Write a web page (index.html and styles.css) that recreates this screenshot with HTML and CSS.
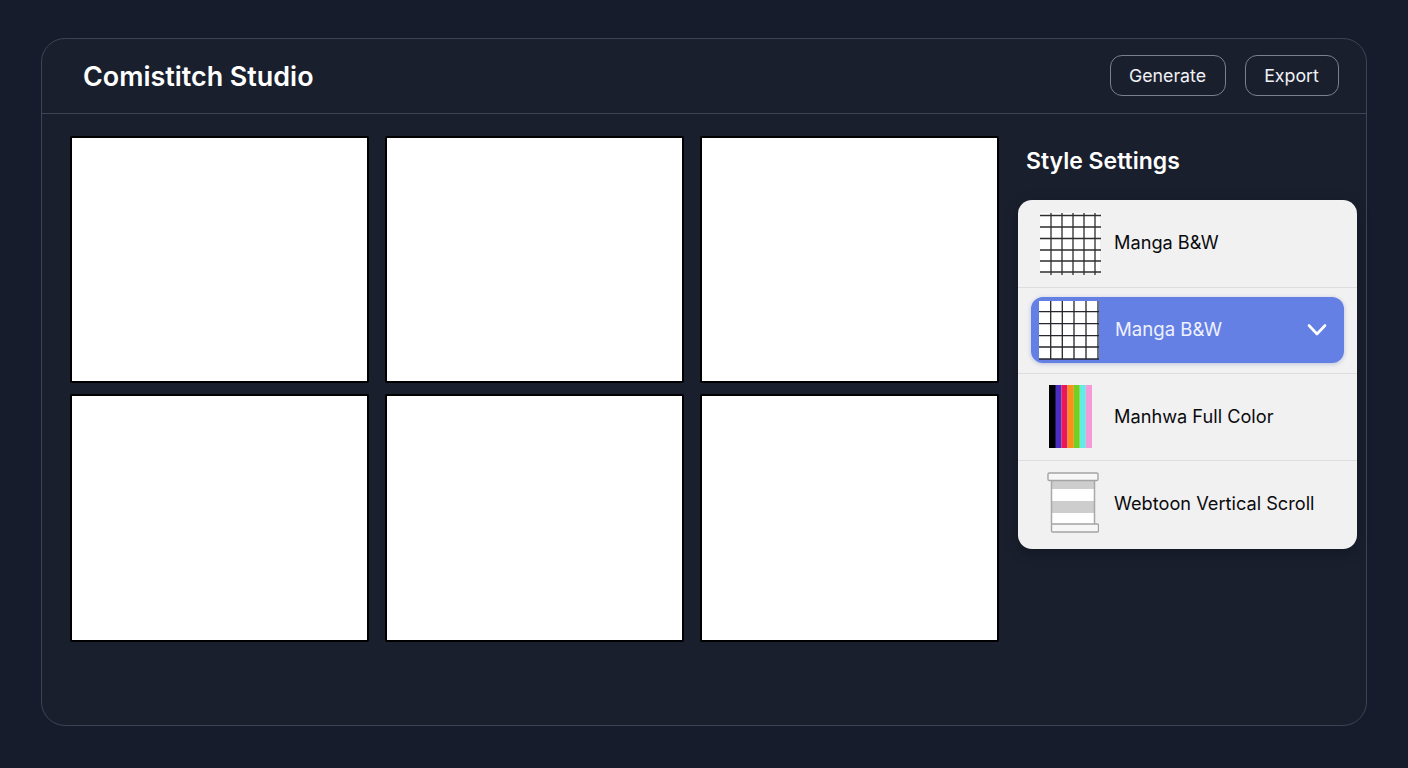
FILE: index.html
```html
<!DOCTYPE html>
<html lang="en">
<head>
<meta charset="utf-8">
<title>Comistitch Studio</title>
<link rel="stylesheet" href="styles.css">
</head>
<body>
<div class="frame">
  <header class="topbar">
    <h1 class="brand">Comistitch Studio</h1>
    <div class="actions">
      <button class="btn btn-generate">Generate</button>
      <button class="btn btn-export">Export</button>
    </div>
  </header>
  <main class="content">
    <section class="gallery">
      <div class="panel"></div>
      <div class="panel"></div>
      <div class="panel"></div>
      <div class="panel"></div>
      <div class="panel"></div>
      <div class="panel"></div>
    </section>
    <aside class="sidebar">
      <h2 class="side-title">Style Settings</h2>
      <div class="card">
        <div class="option option-first">
          <svg class="thumb" width="62" height="64" viewBox="0 0 62 64" aria-hidden="true">
            <rect x="0" y="2" width="60" height="60" fill="#fff"/>
            <g stroke="#2e2e2e" stroke-width="1.3" fill="none">
              <path d="M0 4.5H61M0 16H61M0 27.5H61M0 39H61M0 50H61M0 61H61"/>
              <path d="M11 2V64M22 2V64M33 2V64M44 2V64M55 2V64"/>
            </g>
          </svg>
          <span class="label label-first">Manga B&amp;W</span>
        </div>
        <div class="option option-second">
          <div class="pill">
            <svg class="thumb" width="61" height="59" viewBox="0 0 61 59" aria-hidden="true">
              <rect x="0" y="0" width="60" height="58" fill="#fff"/>
              <g stroke="#26262c" stroke-width="1.3" fill="none">
                <path d="M0 10.7H60M0 22.7H60M0 34.7H60M0 46H60M0 58H60"/>
                <path d="M11.7 0V58M23.3 0V58M35 0V58M47 0V58M59 0V58"/>
              </g>
            </svg>
            <span class="label label-on">Manga B&amp;W</span>
            <svg class="check" width="20" height="14" viewBox="0 0 20 14" aria-hidden="true">
              <path d="M2 2.5L10 11L18 2.5" fill="none" stroke="#fff" stroke-width="2.6" stroke-linecap="round" stroke-linejoin="round"/>
            </svg>
          </div>
        </div>
        <div class="option option-third">
          <svg class="thumb thumb-wide" width="43" height="63" viewBox="0 0 43 63" aria-hidden="true">
            <rect x="0" width="7" height="63" fill="#000"/>
            <rect x="6.5" width="6" height="63" fill="#4a2ec4"/>
            <rect x="12.5" width="6" height="63" fill="#ec1759"/>
            <rect x="18.5" width="6.3" height="63" fill="#fb8f1e"/>
            <rect x="24.8" width="6" height="63" fill="#72d020"/>
            <rect x="30.8" width="6" height="63" fill="#63ece6"/>
            <rect x="36.8" width="6.2" height="63" fill="#f59ad9"/>
          </svg>
          <span class="label label-third">Manhwa Full Color</span>
        </div>
        <div class="option option-fourth">
          <svg class="thumb thumb-scroll" width="52" height="61" viewBox="0 0 52 61" aria-hidden="true">
            <rect x="4.5" y="8" width="43" height="44" fill="#fff"/>
            <rect x="4.5" y="8" width="43" height="9" fill="#cdcdcd"/>
            <rect x="4.5" y="29" width="43" height="12" fill="#cdcdcd"/>
            <path d="M4.5 8V52M47.5 8V52" stroke="#a9a9a9" stroke-width="1.5" fill="none"/>
            <rect x="1" y="1" width="50" height="7.5" rx="1.2" fill="#f7f7f7" stroke="#a4a4a4" stroke-width="1.4"/>
            <rect x="4.5" y="52" width="47" height="8" rx="1.2" fill="#f7f7f7" stroke="#a4a4a4" stroke-width="1.4"/>
          </svg>
          <span class="label label-fourth">Webtoon Vertical Scroll</span>
        </div>
      </div>
    </aside>
  </main>
</div>
</body>
</html>
```
FILE: styles.css
```css
* { box-sizing: border-box; }
html, body { margin: 0; height: 100%; }
body {
  width: 1408px;
  height: 768px;
  overflow: hidden;
  background: #161c2b;
  padding: 38px 41px 42px;
  font-family: Inter, "Liberation Sans", sans-serif;
}
.frame {
  width: 1326px;
  height: 688px;
  background: #1a1f2e;
  border: 1px solid #3d4352;
  border-radius: 24px;
  display: flex;
  flex-direction: column;
}
.topbar {
  height: 75px;
  flex: none;
  border-bottom: 1px solid #3d4352;
  display: flex;
  align-items: center;
  justify-content: space-between;
  padding: 0 27px 0 41px;
}
.brand {
  margin: 0;
  color: #fff;
  font-size: 26.9px;
  font-weight: 600;
  letter-spacing: 0;
}
.actions { display: flex; gap: 19px; margin-bottom: 2px; }
.btn {
  height: 41px;
  background: transparent;
  border: 1px solid #7b808c;
  border-radius: 12px;
  color: #f1f2f5;
  font-family: inherit;
  font-size: 17.8px;
  font-weight: 400;
  padding: 0 1px 0 0;
}
.btn-generate { width: 116px; }
.btn-export { width: 94px; }
.content {
  flex: 1;
  display: flex;
  gap: 19px;
  padding: 22px 9px 0 28px;
}
.gallery {
  width: 929px;
  height: 506px;
  display: grid;
  grid-template-columns: repeat(3, 1fr);
  grid-template-rows: 247px 248px;
  column-gap: 16.5px;
  row-gap: 11px;
}
.panel {
  background: #fff;
  border: 2px solid #000;
  border-radius: 2px;
}
.sidebar { width: 339px; }
.side-title {
  margin: 11px 0 25px 8px;
  color: #fff;
  font-size: 23px;
  line-height: 28px;
  font-weight: 600;
}
.card {
  background: #f1f1f2;
  border-radius: 14px;
  height: 349px;
  box-shadow: 0 4px 14px rgba(0, 0, 0, 0.25);
  display: flex;
  flex-direction: column;
}
.option {
  display: flex;
  align-items: center;
  border-bottom: 1px solid #dcdde0;
  padding-left: 22px;
  flex: none;
}
.option-first { height: 88px; }
.option-second { height: 86px; padding: 0 13px; }
.option-third { height: 87px; padding-left: 31px; }
.option-fourth { height: 88px; padding-left: 29px; border-bottom: 0; }
.thumb { flex: none; display: block; }
.option-first .thumb { margin: 0 12px 2px 0; }
.thumb-wide { margin: 0 22px 2px 0; }
.option-fourth .thumb-scroll { margin: 0 15px 6px 0; }
.label {
  color: #0b0b0d;
  font-size: 18.2px;
  font-weight: 400;
  white-space: nowrap;
}
.label-first { margin-bottom: 4px; }
.label-third { margin-bottom: 2px; }
.label-fourth { margin-bottom: 5px; }
.pill {
  width: 100%;
  height: 66px;
  margin-bottom: 1px;
  background: #6480e4;
  border-radius: 12px;
  box-shadow: 0 1px 4px rgba(60, 80, 160, 0.3);
  display: flex;
  align-items: center;
  padding-left: 8px;
  padding-right: 17px;
}
.pill .thumb { margin-right: 15px; }
.label-on { color: #eef1ff; font-size: 18.6px; margin-bottom: 3px; }
.check { margin-left: auto; margin-bottom: 1px; }
```
